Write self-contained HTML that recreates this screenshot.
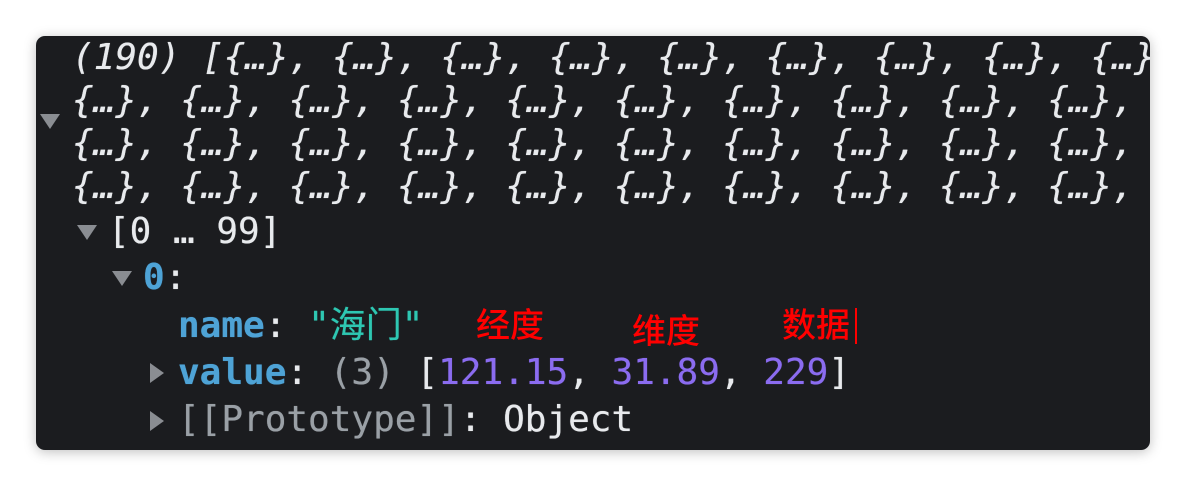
<!DOCTYPE html>
<html><head><meta charset="utf-8"><style>
html,body{margin:0;padding:0;background:#fff;width:1186px;height:486px;overflow:hidden}
.p{position:absolute;left:36px;top:36px;width:1114px;height:414px;background:#1b1c1f;border-radius:9px;box-shadow:0 2px 12px rgba(0,0,0,.25);overflow:hidden}
.l{position:absolute;white-space:pre;font-family:"DejaVu Sans Mono","Liberation Mono","Noto Sans CJK SC",monospace;font-size:36px;line-height:43px;color:#e8eaed;text-shadow:0 0 0.6px currentColor}
.i{font-style:italic}
.k{color:#4ea3d6;font-weight:bold}
.s{color:#2ec7b2}
.n{color:#8b6cf0}
.g{color:#9aa0a6}
.r{position:absolute;color:#ff0000;font-family:"Noto Sans CJK SC",sans-serif;font-size:34px;font-weight:500;line-height:40px}
.t{position:absolute;width:0;height:0;border-left:10px solid transparent;border-right:10px solid transparent;border-top:15px solid #8a8d92}
.tr{position:absolute;width:0;height:0;border-top:10px solid transparent;border-bottom:10px solid transparent;border-left:14px solid #8a8d92}
</style></head><body>
<div class="p">
<div class="t" style="left:4px;top:78px"></div>
<div class="l i" style="left:36px;top:0px">(190) [{…}, {…}, {…}, {…}, {…}, {…}, {…}, {…}, {…}</div>
<div class="l i" style="left:36px;top:43px">{…}, {…}, {…}, {…}, {…}, {…}, {…}, {…}, {…}, {…},</div>
<div class="l i" style="left:36px;top:86px">{…}, {…}, {…}, {…}, {…}, {…}, {…}, {…}, {…}, {…},</div>
<div class="l i" style="left:36px;top:129px">{…}, {…}, {…}, {…}, {…}, {…}, {…}, {…}, {…}, {…},</div>
<div class="t" style="left:41px;top:189px"></div>
<div class="l" style="left:72px;top:174px">[0 … 99]</div>
<div class="t" style="left:76px;top:235px"></div>
<div class="l" style="left:107px;top:220px"><span class="k">0</span>:</div>
<div class="l" style="left:142px;top:268px"><span class="k">name</span>: <span class="s">"海门"</span></div>
<div class="tr" style="left:114px;top:327px"></div>
<div class="l" style="left:142px;top:315px"><span class="k">value</span>: <span class="g">(3)</span> [<span class="n">121.15</span>, <span class="n">31.89</span>, <span class="n">229</span>]</div>
<div class="tr" style="left:114px;top:375px"></div>
<div class="l" style="left:142px;top:362px"><span class="g">[[Prototype]]</span>: Object</div>
<div class="r" style="left:440px;top:267px">经度</div>
<div class="r" style="left:596px;top:273px">维度</div>
<div class="r" style="left:746px;top:267px">数据</div>
<div style="position:absolute;left:819px;top:272px;width:2px;height:36px;background:#ff0000"></div>
</div>
</body></html>
